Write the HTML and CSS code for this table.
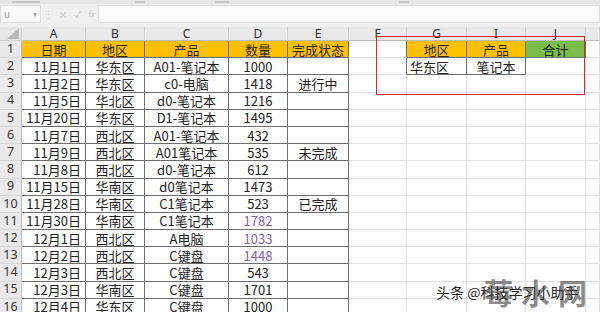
FILE: index.html
```html
<!DOCTYPE html>
<html lang="zh">
<head>
<meta charset="utf-8">
<link rel="stylesheet" href="styles.css">
</head>
<body>
<div class="app">
  <div class="top">
    <div class="ribbon"><span class="rb r1"></span><span class="rb r2"></span><span class="rb r3"></span><span class="rb r4"></span></div>
    <div class="fbar">
      <div class="namebox"><span class="nb">u</span><span class="dd">▾</span></div>
      <div class="sep">⋮</div>
      <div class="icons"><span>×</span><span>✓</span><span class="fx">fx</span></div>
      <div class="formula"></div>
    </div>
  </div>
  <div class="sheet">
    <div class="corner"><svg width="12" height="11" viewBox="0 0 12 11"><polygon points="12,0 12,11 0,11" fill="#b9b9b9"/></svg></div>
    <div class="ch">A</div><div class="ch">B</div><div class="ch">C</div><div class="ch">D</div><div class="ch">E</div><div class="ch">F</div><div class="ch">G</div><div class="ch">I</div><div class="ch">J</div><div class="ch"></div>

    <div class="rh">1</div>
    <div class="c t y">日期</div><div class="c t y">地区</div><div class="c t y">产品</div><div class="c t y">数量</div><div class="c t y">完成状态</div>
    <div class="c tr"></div><div class="c t y">地区</div><div class="c t y">产品</div><div class="c t g">合计</div><div class="c"></div>

    <div class="rh">2</div>
    <div class="c t r">11月1日</div><div class="c t">华东区</div><div class="c t">A01-笔记本</div><div class="c t">1000</div><div class="c t"></div>
    <div class="c tr"></div><div class="c t l">华东区</div><div class="c t">笔记本</div><div class="c"></div><div class="c"></div>

    <div class="rh">3</div>
    <div class="c t r">11月2日</div><div class="c t">华东区</div><div class="c t">c0-电脑</div><div class="c t">1418</div><div class="c t">进行中</div>
    <div class="c"></div><div class="c"></div><div class="c"></div><div class="c"></div><div class="c"></div>

    <div class="rh">4</div>
    <div class="c t r">11月5日</div><div class="c t">华北区</div><div class="c t">d0-笔记本</div><div class="c t">1216</div><div class="c t"></div>
    <div class="c"></div><div class="c"></div><div class="c"></div><div class="c"></div><div class="c"></div>

    <div class="rh">5</div>
    <div class="c t r">11月20日</div><div class="c t">华东区</div><div class="c t">D1-笔记本</div><div class="c t">1495</div><div class="c t"></div>
    <div class="c"></div><div class="c"></div><div class="c"></div><div class="c"></div><div class="c"></div>

    <div class="rh">6</div>
    <div class="c t r">11月7日</div><div class="c t">西北区</div><div class="c t">A01-笔记本</div><div class="c t">432</div><div class="c t"></div>
    <div class="c"></div><div class="c"></div><div class="c"></div><div class="c"></div><div class="c"></div>

    <div class="rh">7</div>
    <div class="c t r">11月9日</div><div class="c t">西北区</div><div class="c t">A01笔记本</div><div class="c t">535</div><div class="c t">未完成</div>
    <div class="c"></div><div class="c"></div><div class="c"></div><div class="c"></div><div class="c"></div>

    <div class="rh">8</div>
    <div class="c t r">11月8日</div><div class="c t">西北区</div><div class="c t">d0-笔记本</div><div class="c t">612</div><div class="c t"></div>
    <div class="c"></div><div class="c"></div><div class="c"></div><div class="c"></div><div class="c"></div>

    <div class="rh">9</div>
    <div class="c t r">11月15日</div><div class="c t">华南区</div><div class="c t">d0笔记本</div><div class="c t">1473</div><div class="c t"></div>
    <div class="c"></div><div class="c"></div><div class="c"></div><div class="c"></div><div class="c"></div>

    <div class="rh">10</div>
    <div class="c t r">11月28日</div><div class="c t">华南区</div><div class="c t">C1笔记本</div><div class="c t">523</div><div class="c t">已完成</div>
    <div class="c"></div><div class="c"></div><div class="c"></div><div class="c"></div><div class="c"></div>

    <div class="rh">11</div>
    <div class="c t r">11月30日</div><div class="c t">华南区</div><div class="c t">C1笔记本</div><div class="c t p">1782</div><div class="c t"></div>
    <div class="c"></div><div class="c"></div><div class="c"></div><div class="c"></div><div class="c"></div>

    <div class="rh">12</div>
    <div class="c t r">12月1日</div><div class="c t">西北区</div><div class="c t">A电脑</div><div class="c t p">1033</div><div class="c t"></div>
    <div class="c"></div><div class="c"></div><div class="c"></div><div class="c"></div><div class="c"></div>

    <div class="rh">13</div>
    <div class="c t r">12月2日</div><div class="c t">西北区</div><div class="c t">C键盘</div><div class="c t p">1448</div><div class="c t"></div>
    <div class="c"></div><div class="c"></div><div class="c"></div><div class="c"></div><div class="c"></div>

    <div class="rh">14</div>
    <div class="c t r">12月3日</div><div class="c t">西北区</div><div class="c t">C键盘</div><div class="c t">543</div><div class="c t"></div>
    <div class="c"></div><div class="c"></div><div class="c"></div><div class="c"></div><div class="c"></div>

    <div class="rh">15</div>
    <div class="c t r">12月3日</div><div class="c t">华南区</div><div class="c t">C键盘</div><div class="c t">1701</div><div class="c t"></div>
    <div class="c"></div><div class="c"></div><div class="c"></div><div class="c"></div><div class="c"></div>

    <div class="rh">16</div>
    <div class="c t r">12月4日</div><div class="c t">华东区</div><div class="c t">C键盘</div><div class="c t">1000</div><div class="c t"></div>
    <div class="c"></div><div class="c"></div><div class="c"></div><div class="c"></div><div class="c"></div>
  </div>

  <div class="redbox"></div>
  <div class="wm">
    <span class="wm-txt">头条 @科技学习小助手</span>
    <span class="wm-logo">莓水网</span>
  </div>
</div>
</body>
</html>
```

FILE: styles.css
```css
* { box-sizing: border-box; }
html, body { margin: 0; padding: 0; background: #fff; }
body { font-family: "Noto Sans CJK SC", "Noto Sans", sans-serif; }
.app { position: relative; width: 600px; height: 312px; overflow: hidden; background: #fff; }

.top { height: 27px; background: #efefef; display: flex; flex-direction: column; }
.ribbon { height: 4px; display: flex; background: #e6e6e6; }
.rb { display: block; height: 2px; background: #c4c4c4; margin-top: 1px; }
.r1 { width: 28px; margin-left: 12px; }
.r2 { width: 10px; margin-left: 95px; }
.r3 { width: 14px; margin-left: 70px; }
.r4 { width: 10px; margin-left: 170px; }
.fbar { height: 18px; margin-top: 1px; display: flex; align-items: stretch; }
.namebox { width: 41px; background: #fafafa; border: 1px solid #dcdcdc; display: flex; justify-content: space-between; align-items: center; padding: 0 3px; font-size: 10px; color: #999; line-height: 1; }
.dd { font-size: 8px; color: #aaa; }
.sep { width: 14px; color: #c4c4c4; font-size: 10px; display: flex; align-items: center; justify-content: center; line-height: 1; }
.icons { width: 43px; display: flex; align-items: center; justify-content: space-around; font-size: 9px; color: #c2c2c2; line-height: 1; }
.fx { font-style: italic; font-size: 8px; }
.formula { flex: 1; background: #fbfbfb; border: 1px solid #dedede; }

.sheet {
  display: grid;
  grid-template-columns: 22px 64px 59px 84px 59px 61px 58px 60px 59px 60px 14px;
  grid-template-rows: 14px;
  grid-auto-rows: 17.2px;
  font-size: 13px;
  color: #222;
}
.corner { background: #e6e6e6; border-right: 1px solid #cfcfcf; border-bottom: 1px solid #cfcfcf; display: flex; align-items: flex-end; justify-content: flex-end; padding: 0 2px 1px 0; }
.ch { background: #e9e9e9; border-right: 1px solid #d2d2d2; border-bottom: 1px solid #bdbdbd; font-family: "Noto Sans", sans-serif; font-size: 12px; color: #2e2e2e; display: flex; align-items: center; justify-content: center; line-height: 1; padding-top: 1px; }
.rh { background: #e9e9e9; border-right: 1px solid #bdbdbd; border-bottom: 1px solid #d6d6d6; font-family: "Noto Sans", sans-serif; font-size: 12.5px; color: #333; display: flex; align-items: center; justify-content: center; line-height: 1; }
.c { border-right: 1px solid #e0e0e0; border-bottom: 1px solid #e0e0e0; display: flex; align-items: center; justify-content: center; white-space: nowrap; line-height: 1; }
.t { border-color: #6e6e6e; }
.tr { border-right-color: #6e6e6e; }
.r { justify-content: flex-end; padding-right: 4px; }
.l { justify-content: flex-start; padding-left: 3px; }
.y { background: #ffc000; color: #2a2a2a; }
.g { background: #79bd4a; color: #222; }
.p { color: #8064a8; }

.redbox { position: absolute; left: 376px; top: 36px; width: 209px; height: 59px; border: 1.5px solid #d8262c; }

.wm { position: absolute; left: 436px; top: 276px; width: 164px; height: 36px; }
.wm-txt { position: absolute; left: 0; top: 8px; font-size: 14px; line-height: 1.2; color: #262626; white-space: nowrap; text-shadow: 0 0 2px #fff, 0 0 2px #fff; }
.wm-logo { position: absolute; left: 48px; top: 2px; font-size: 29px; font-weight: bold; letter-spacing: 8px; color: rgba(60,60,60,0.6); white-space: nowrap; line-height: 1; }
```
